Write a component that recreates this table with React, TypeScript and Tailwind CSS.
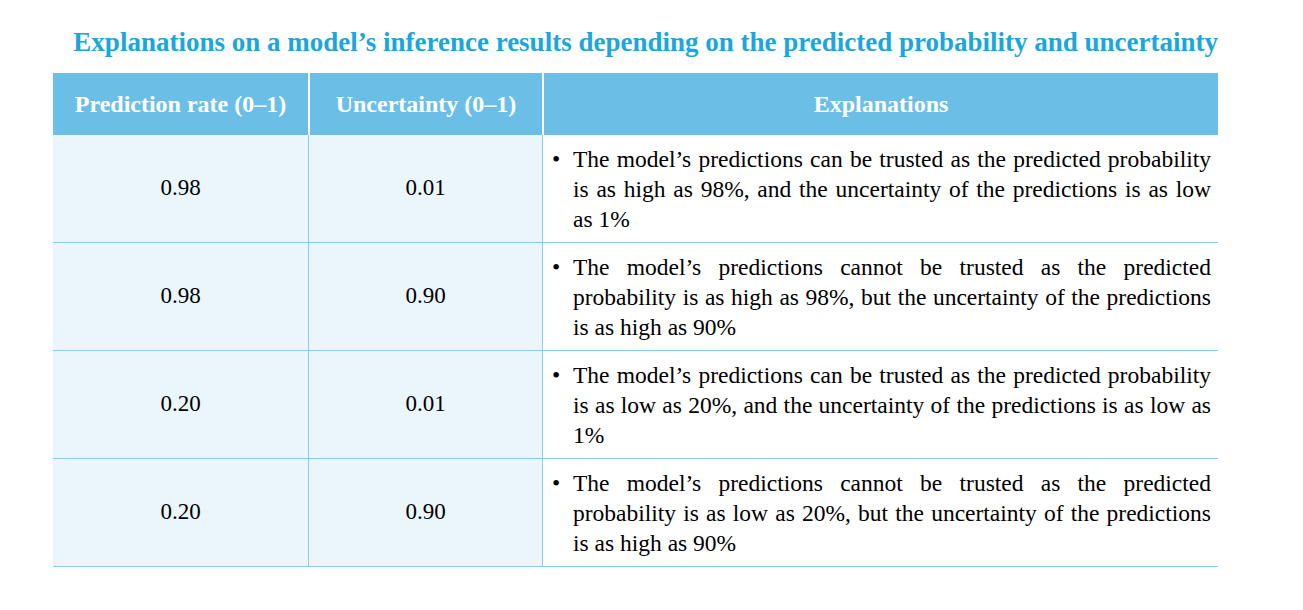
const rows = [
  {
    rate: "0.98",
    unc: "0.01",
    text: "The model’s predictions can be trusted as the predicted probability is as high as 98%, and the uncertainty of the predictions is as low as 1%",
  },
  {
    rate: "0.98",
    unc: "0.90",
    text: "The model’s predictions cannot be trusted as the predicted probability is as high as 98%, but the uncertainty of the predictions is as high as 90%",
  },
  {
    rate: "0.20",
    unc: "0.01",
    text: "The model’s predictions can be trusted as the predicted probability is as low as 20%, and the uncertainty of the predictions is as low as 1%",
  },
  {
    rate: "0.20",
    unc: "0.90",
    text: "The model’s predictions cannot be trusted as the predicted probability is as low as 20%, but the uncertainty of the predictions is as high as 90%",
  },
]

export default function App() {
  return (
    <div className="min-h-screen w-full bg-white font-[family-name:'Liberation_Serif','Times_New_Roman',serif]">
      <div className="ml-[53px] w-[1165px] pt-[25px]">
        {/* title */}
        <h1 className="text-right text-[27px] font-bold leading-[34px] text-[#1ba6dd]">
          Explanations on a model’s inference results depending on the predicted probability and uncertainty
        </h1>

        <div className="mt-[14px] grid grid-cols-[255px_234px_1fr]">
          {/* header */}
          <div className="flex h-[62px] items-center justify-center bg-[#6bbfe6] text-[24px] font-bold text-white">
            Prediction rate (0–1)
          </div>
          <div className="flex h-[62px] items-center justify-center border-l-2 border-white bg-[#6bbfe6] text-[24px] font-bold text-white">
            Uncertainty (0–1)
          </div>
          <div className="flex h-[62px] items-center justify-center border-l-2 border-white bg-[#6bbfe6] text-[24px] font-bold text-white">
            Explanations
          </div>

          {rows.map((r, i) => (
            <div key={i} className="contents">
              <div className="flex h-[108px] items-center justify-center border-b border-[#8ccbed] bg-[#eaf6fc] text-[23px] text-black">
                {r.rate}
              </div>
              <div className="flex h-[108px] items-center justify-center border-b border-l border-[#8ccbed] bg-[#eaf6fc] text-[23px] text-black">
                {r.unc}
              </div>
              <div className="flex h-[108px] items-center border-b border-l border-[#8ccbed] bg-white pl-[9px] pr-[7px] text-[23.5px] leading-[30px] text-black">
                <div className="flex w-full">
                  <span className="w-[21px] shrink-0">•</span>
                  <p className="flex-1 text-justify">{r.text}</p>
                </div>
              </div>
            </div>
          ))}
        </div>
      </div>
    </div>
  )
}
